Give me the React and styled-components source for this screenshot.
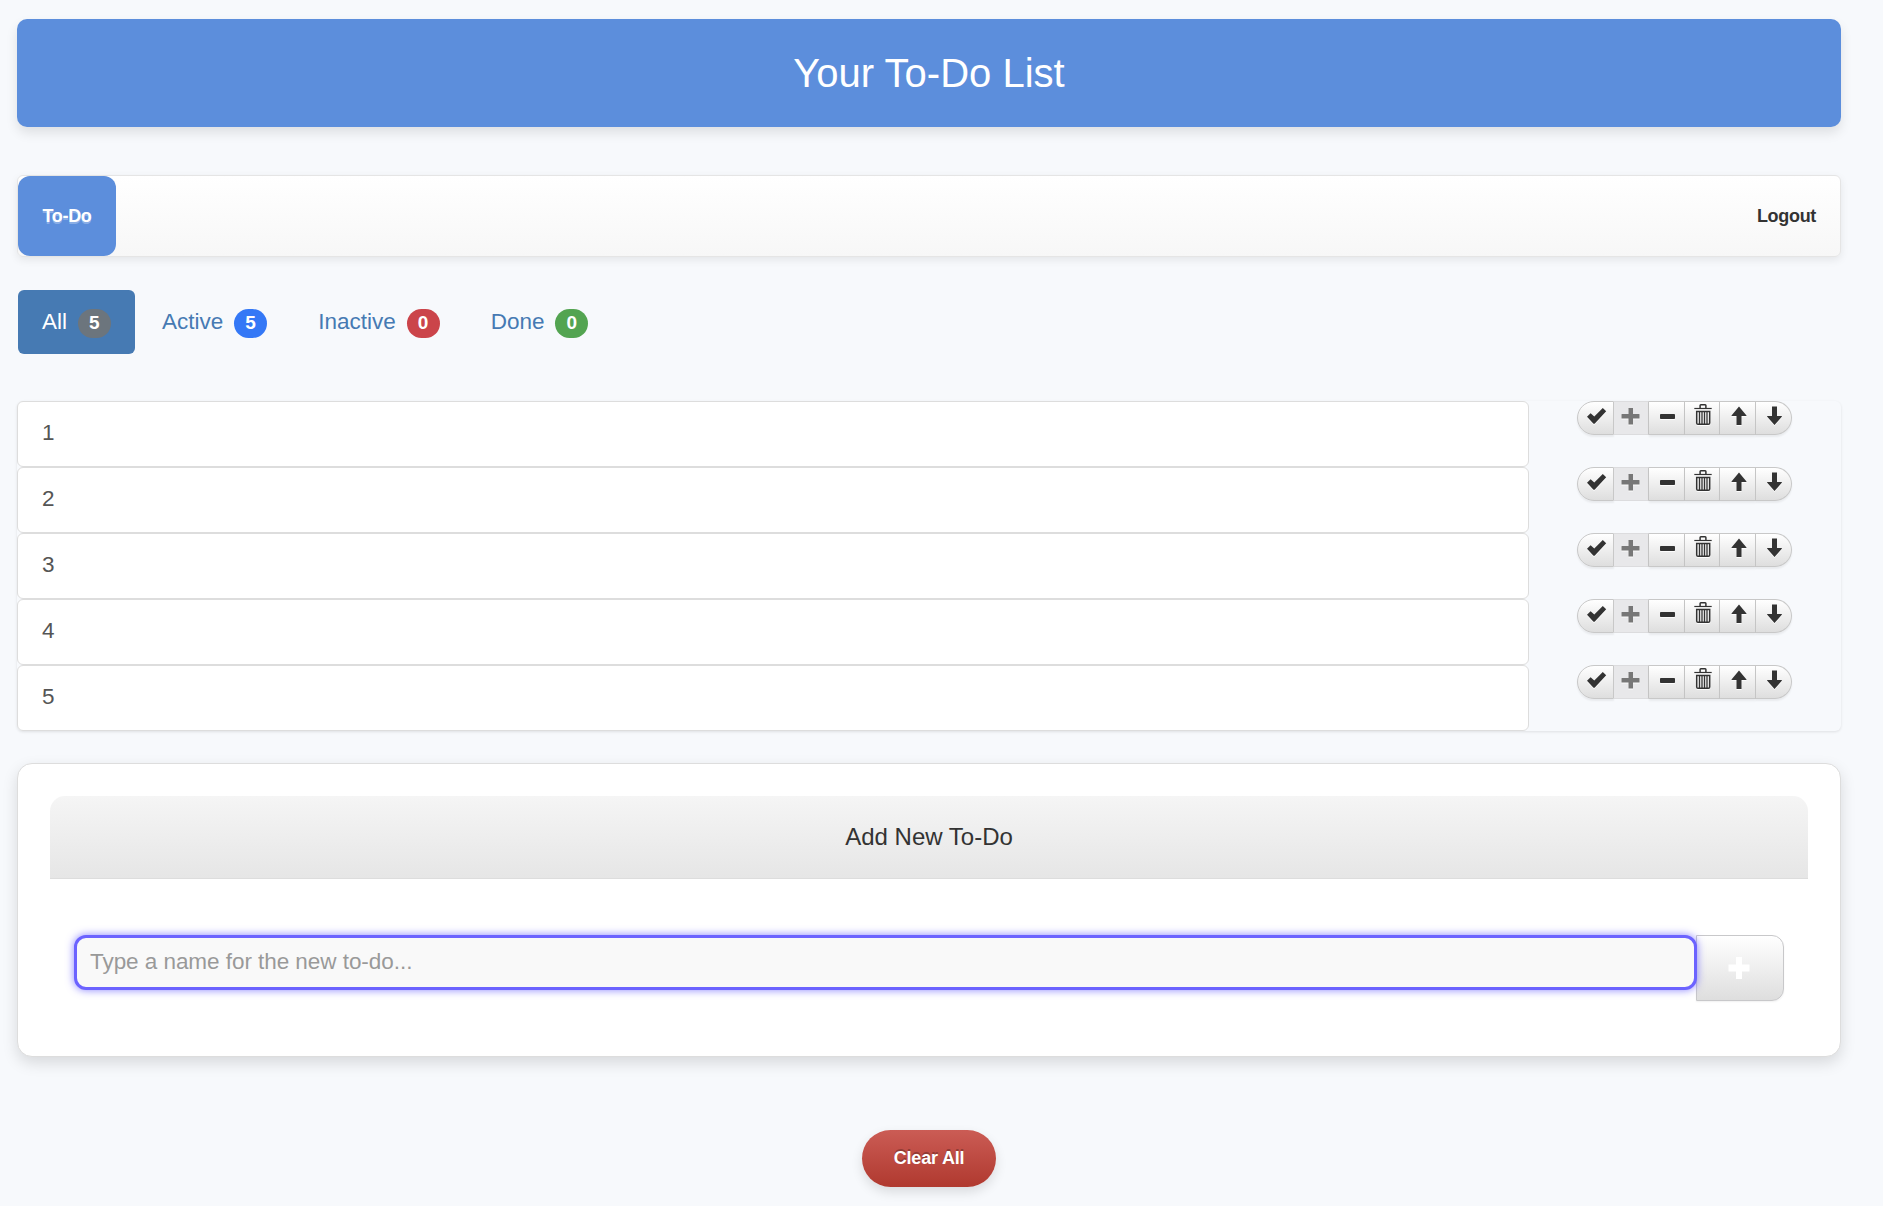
import React from "react";
import styled, { createGlobalStyle, css } from "styled-components";

const GlobalStyle = createGlobalStyle`
  *, *::before, *::after { box-sizing: border-box; }
  body {
    margin: 0;
    background: #f7f9fc;
    color: #333;
    font-family: "Liberation Sans", Arial, Helvetica, sans-serif;
    font-size: 22.5px;
    line-height: 30px;
  }
  button, input { font-family: inherit; margin: 0; }
`;

const Page = styled.main`
  width: 1858px;
  padding: 19px 17px;
  display: flex;
  flex-direction: column;
`;

const Header = styled.header`
  height: 108px;
  border-radius: 10px;
  background: #5c8edc;
  box-shadow: 0 6px 12px rgba(0, 0, 0, 0.1);
  display: flex;
  align-items: center;
  justify-content: center;
`;

const Title = styled.h1`
  margin: 0;
  color: #fff;
  font-size: 40px;
  font-weight: 400;
  line-height: 60px;
`;

const Nav = styled.nav`
  margin-top: 48px;
  height: 82px;
  border: 1px solid #e5e5e5;
  border-radius: 6px;
  background: linear-gradient(#fff, #f7f7f7);
  box-shadow: 0 3px 8px rgba(0, 0, 0, 0.08);
  display: flex;
  justify-content: space-between;
`;

const NavLink = styled.a`
  display: flex;
  align-items: center;
  padding: 0 24px;
  border-radius: 12px;
  font-size: 18px;
  font-weight: 700;
  letter-spacing: -0.32px;
  color: #333;
  ${(p) =>
    p.$active &&
    css`
      width: 98px;
      padding: 0;
      justify-content: center;
      background: #5c8edc;
      color: #fff;
      text-shadow: 0 2px 0 rgba(255, 255, 255, 0.3);
    `}
`;

const Filters = styled.div`
  margin: 33px 1px 0;
  display: flex;
  gap: 3.2px;
`;

const Filter = styled.a`
  height: 64px;
  padding: 0 24px;
  display: flex;
  align-items: center;
  gap: 10.8px;
  border-radius: 6px;
  color: ${(p) => (p.$active ? "#fff" : "#467ab3")};
  background: ${(p) => (p.$active ? "#467ab3" : "transparent")};
`;

const FilterLabel = styled.span`
  padding-bottom: 1px;
`;

const Badge = styled.span`
  width: 33px;
  height: 29px;
  margin-top: 2px;
  border-radius: 15px;
  background: ${(p) => p.$color};
  color: #fff;
  font-size: 19px;
  font-weight: 700;
  line-height: 28px;
  text-align: center;
`;

const List = styled.ul`
  margin: 47px 0 0;
  padding: 0;
  list-style: none;
  border-radius: 6px;
  box-shadow: 0 1px 3px rgba(0, 0, 0, 0.1);
`;

const Row = styled.li`
  display: flex;
  align-items: flex-start;
  justify-content: space-between;
  height: 66px;
  padding-right: 49px;
`;

const ItemName = styled.div`
  width: 1512px;
  height: 66px;
  padding: 0 24px;
  border: 1px solid #ddd;
  border-radius: 6px;
  background: #fff;
  color: #555;
  line-height: 62px;
`;

const Actions = styled.div`
  display: flex;
`;

const Action = styled.button`
  width: ${(p) => p.$width}px;
  height: 34px;
  padding: 0;
  border: 1px solid #c8c8c8;
  border-left-width: ${(p) => (p.$first ? 1 : 0)}px;
  border-radius: ${(p) => (p.$first ? "17px 0 0 17px" : p.$last ? "0 17px 17px 0" : 0)};
  background: linear-gradient(#fff, #dedede);
  box-shadow: 0 2px 2px rgba(0, 0, 0, 0.06);
  display: flex;
  justify-content: center;
  color: #333;
  ${(p) =>
    p.disabled &&
    css`
      background: #e8e8ea;
      border-top-color: #dcdcde;
      border-bottom-color: #dcdcde;
      box-shadow: none;
      color: #777;
    `}
`;

const Glyph = styled.svg`
  width: 22px;
  height: 26px;
  flex: none;
  margin-top: 1px;
  fill: currentColor;
  filter: drop-shadow(0 1.5px 0 rgba(255, 255, 255, 0.85));
`;

const Card = styled.section`
  margin-top: 32px;
  height: 294px;
  padding: 32px;
  border: 1px solid #ddd;
  border-radius: 15px;
  background: #fff;
  box-shadow: 0 6px 15px rgba(0, 0, 0, 0.13);
`;

const CardTitle = styled.div`
  height: 83px;
  border-bottom: 1px solid #ddd;
  border-radius: 15px 15px 0 0;
  background: linear-gradient(#f5f5f5, #e6e6e6);
  font-size: 24px;
  line-height: 82px;
  text-align: center;
`;

const Form = styled.form`
  margin: 56px 24px 0;
  display: flex;
  align-items: flex-start;
`;

const NameInput = styled.input`
  position: relative;
  z-index: 1;
  flex: 1;
  height: 55px;
  padding: 0 13px 2px;
  border: 3px solid #6c63ff;
  border-radius: 12px;
  outline: none;
  background: #f9f9f9;
  box-shadow: 0 0 9px rgba(108, 99, 255, 0.8);
  font-size: 22.5px;
  letter-spacing: -0.05px;
  &::placeholder { color: #999; opacity: 1; }
`;

const AddButton = styled.button`
  width: 88px;
  height: 66px;
  margin-left: -1px;
  padding: 0 3px 0 0;
  border: 1px solid #c8c8ca;
  border-radius: 0 12px 12px 0;
  background: linear-gradient(#fff, #dedede);
  box-shadow: 0 1px 2px rgba(0, 0, 0, 0.06);
  color: #fff;
  display: flex;
  align-items: center;
  justify-content: center;
`;

const ClearButton = styled.button`
  align-self: center;
  margin-top: 73px;
  width: 134px;
  height: 57px;
  padding: 0 0 1px;
  border: 0;
  border-radius: 29px;
  background: linear-gradient(#cb5c55, #b0392f);
  box-shadow: 0 5px 12px rgba(0, 0, 0, 0.12);
  color: #fff;
  font-size: 18px;
  font-weight: 700;
  letter-spacing: -0.2px;
  text-shadow: 0 -2px 0 rgba(0, 0, 0, 0.25);
`;

const glyphs = {
  done: <path d="M2 13.800L5.600 10.300L9.300 13.400L17.800 5L21.200 8.300L9.600 20.800H8.500Z" />,
  activate: <path d="M8.500 5h4.500v6h6q.500 0 .500.500v4H13v6H8.500v-6h-7v-4q0-.500.500-.500h6.500z" />,
  deactivate: <rect x="4" y="11" width="15" height="5" rx="0.8" />,
  remove: (
    <g fill="none" stroke="currentColor">
      <path d="M3.300 5.500h17.400" strokeWidth="1.200" />
      <path d="M9.100 5V2.600q0-.8.800-.8h4.200q.8 0 .8.800V5" strokeWidth="1.500" />
      <path d="M5.700 8.500h13v11.500q0 1.300-1.300 1.300H7q-1.300 0-1.300-1.300z" strokeWidth="1.500" />
      <path d="M8.500 9v12M11 9v12M13.500 9v12M16 9v12" strokeWidth="1.300" />
    </g>
  ),
  up: <path d="M12 3.500L19.500 12.500Q19.500 13 19 13H14.500V22H9.500V13H5Q4.500 13 4.500 12.500Z" />,
  down: <path d="M11.500 22L19 13.500Q19 13 18.500 13H14V3.500H9V13H4.500Q4 13 4 13.500Z" />,
};

const actions = [
  { name: "done", width: 37 },
  { name: "activate", width: 35, disabled: true },
  { name: "deactivate", width: 36 },
  { name: "remove", width: 35 },
  { name: "up", width: 36 },
  { name: "down", width: 36 },
];

const filters = [
  { label: "All", count: 5, color: "#6c757d", active: true },
  { label: "Active", count: 5, color: "#3478f6" },
  { label: "Inactive", count: 0, color: "#cb444a" },
  { label: "Done", count: 0, color: "#53a451" },
];

const todos = ["1", "2", "3", "4", "5"];

function ActionGroup() {
  return (
    <Actions>
      {actions.map((a, i) => (
        <Action
          key={a.name}
          type="button"
          $width={a.width}
          $first={i === 0}
          $last={i === actions.length - 1}
          disabled={a.disabled}
        >
          <Glyph viewBox="0 0 22 26">{glyphs[a.name]}</Glyph>
        </Action>
      ))}
    </Actions>
  );
}

export default function App() {
  return (
    <>
      <GlobalStyle />
      <Page>
        <Header>
          <Title>Your To-Do List</Title>
        </Header>
        <Nav>
          <NavLink $active>To-Do</NavLink>
          <NavLink>Logout</NavLink>
        </Nav>
        <Filters>
          {filters.map((f) => (
            <Filter key={f.label} $active={f.active}>
              <FilterLabel>{f.label}</FilterLabel>
              <Badge $color={f.color}>{f.count}</Badge>
            </Filter>
          ))}
        </Filters>
        <List>
          {todos.map((t) => (
            <Row key={t}>
              <ItemName>{t}</ItemName>
              <ActionGroup />
            </Row>
          ))}
        </List>
        <Card>
          <CardTitle>Add New To-Do</CardTitle>
          <Form>
            <NameInput placeholder="Type a name for the new to-do..." />
            <AddButton type="button">
              <svg width="22" height="22" viewBox="0 0 22 22" fill="currentColor">
                <path d="M8 0h6v7.500h7.500v7H14V22H8v-7.500H.5v-7H8z" />
              </svg>
            </AddButton>
          </Form>
        </Card>
        <ClearButton type="button">Clear All</ClearButton>
      </Page>
    </>
  );
}
